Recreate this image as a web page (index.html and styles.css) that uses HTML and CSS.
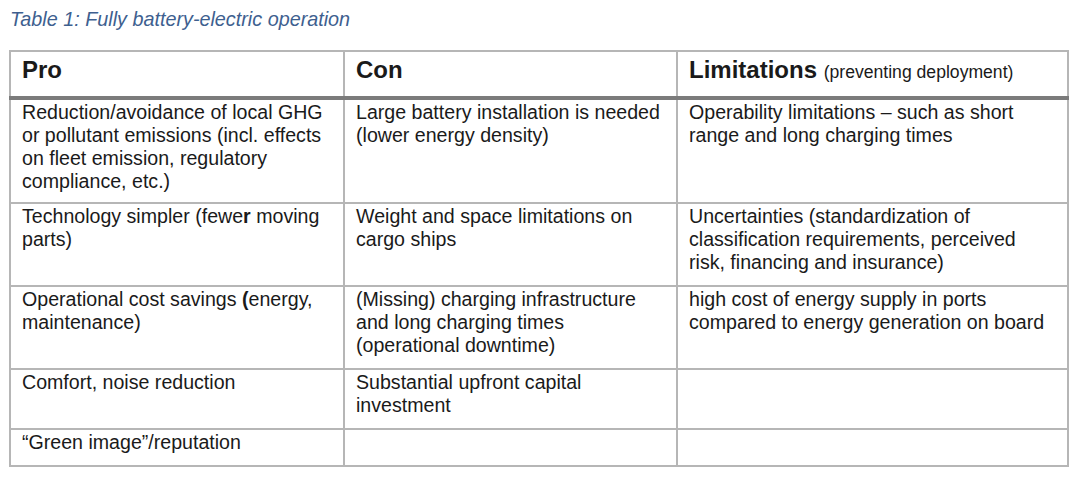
FILE: index.html
```html
<!DOCTYPE html>
<html>
<head>
<meta charset="utf-8">
<link rel="stylesheet" href="styles.css">
</head>
<body>
<div class="page">
  <p class="caption">Table 1: Fully battery-electric operation</p>
  <table class="grid">
    <colgroup>
      <col class="c1"><col class="c2"><col class="c3">
    </colgroup>
    <thead>
      <tr class="head">
        <th>Pro</th>
        <th>Con</th>
        <th>Limitations <span class="sub">(preventing deployment)</span></th>
      </tr>
    </thead>
    <tbody>
      <tr class="r1">
        <td>Reduction/avoidance of local GHG or pollutant emissions (incl. effects on fleet emission, regulatory compliance, etc.)</td>
        <td>Large battery installation is needed (lower energy density)</td>
        <td>Operability limitations – such as short range and long charging times</td>
      </tr>
      <tr class="r2">
        <td>Technology simpler (fewe<b class="bold">r</b> moving parts)</td>
        <td>Weight and space limitations on cargo ships</td>
        <td>Uncertainties (standardization of classification requirements, perceived risk, financing and insurance)</td>
      </tr>
      <tr class="r3">
        <td>Operational cost savings <b class="bold">(</b>energy, maintenance)</td>
        <td>(Missing) charging infrastructure and long charging times (operational downtime)</td>
        <td>high cost of energy supply in ports compared to energy generation on board</td>
      </tr>
      <tr class="r4">
        <td>Comfort, noise reduction</td>
        <td>Substantial upfront capital investment</td>
        <td></td>
      </tr>
      <tr class="r5">
        <td>“Green image”/reputation</td>
        <td></td>
        <td></td>
      </tr>
    </tbody>
  </table>
</div>
</body>
</html>
```

FILE: styles.css
```css
html, body {
  margin: 0;
  padding: 0;
  background: #ffffff;
}

.page {
  padding: 0 0 0 9px;
  font-family: "Liberation Sans", Arial, sans-serif;
  color: #1a1a1a;
}

.caption {
  margin: 0;
  height: 50px;
  padding-top: 7px;
  box-sizing: border-box;
  padding-left: 1px;
  font-size: 19.8px;
  line-height: 24px;
  font-style: italic;
  color: #3e5f8f;
}

.grid {
  border-collapse: collapse;
  table-layout: fixed;
  width: 1058px;
}

.c1 { width: 334px; }
.c2 { width: 333px; }
.c3 { width: 391px; }

.grid th,
.grid td {
  border: 2px solid #b6b6b6;
  vertical-align: top;
  text-align: left;
  padding: 1px 13px 0 11px;
  font-size: 19.6px;
  line-height: 23px;
  font-weight: normal;
}

.grid th {
  font-weight: bold;
  font-size: 24px;
  line-height: 28px;
  padding-top: 4px;
  padding-right: 4px;
  height: 47px;
  box-sizing: border-box;
  border-bottom: 4px solid #7b7b7b;
}

.grid th .sub {
  font-weight: normal;
  font-size: 17.6px;
}

.bold { font-weight: bold; }

.r1 td { height: 105px; box-sizing: border-box; }
.r2 td { height: 83px; box-sizing: border-box; }
.r3 td { height: 83px; box-sizing: border-box; }
.r4 td { height: 60px; box-sizing: border-box; }
.r5 td { height: 37px; box-sizing: border-box; }
```
